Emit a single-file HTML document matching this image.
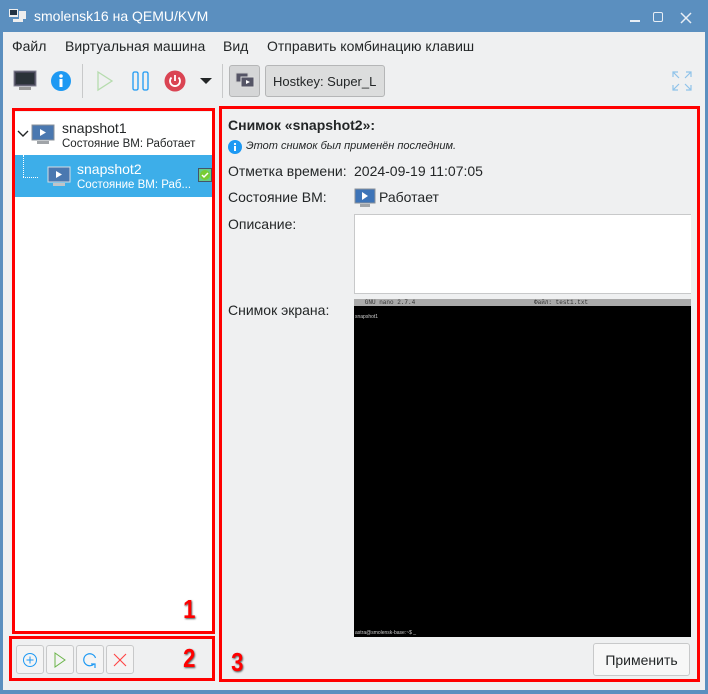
<!DOCTYPE html>
<html><head><meta charset="utf-8"><style>
*{box-sizing:border-box;margin:0;padding:0}
body{width:708px;height:694px;background:#5b8fbf;font-family:"Liberation Sans","DejaVu Sans",sans-serif;font-size:13px;color:#232627;position:relative;overflow:hidden}
.abs{position:absolute;white-space:nowrap}
#win{left:3px;top:32px;width:702px;height:658px;background:#eff0f1}
.title{left:34px;top:8px;color:#fff;font-size:14px}
.menu span{position:absolute;top:38px;font-size:14px}
.red{position:absolute;border:3px solid #f00}
.btn{position:absolute;top:645px;width:28px;height:29px;background:#f4f4f4;border:1px solid #c8c9ca;border-radius:3px}
.num{position:absolute;color:#f00;font-weight:bold;font-size:26px;text-shadow:1px 1px 2px #555;transform:scaleX(.85)}
</style></head><body>
<svg class="abs" style="left:9px;top:9px" width="18" height="16"><rect x="0" y="0" width="9" height="8" fill="#eee"/><rect x="1" y="1" width="7" height="5" fill="#234"/><rect x="10" y="2" width="7" height="8" fill="#eee"/><rect x="4" y="10" width="10" height="3" fill="#eee"/></svg>
<div class="abs title">smolensk16 на QEMU/KVM</div>
<div class="abs" style="left:630px;top:20px;width:10px;height:1.5px;background:#e8eef5"></div>
<div class="abs" style="left:653px;top:12px;width:10px;height:10px;border:1.5px solid #e8eef5;border-radius:2px"></div>
<svg class="abs" style="left:680px;top:12px" width="12" height="12"><path d="M1 1L11 11M11 1L1 11" stroke="#e8eef5" stroke-width="1.5"/></svg>
<div id="win" class="abs"></div>
<div class="menu"><span style="left:12px">Файл</span><span style="left:65px">Виртуальная машина</span><span style="left:223px">Вид</span><span style="left:267px">Отправить комбинацию клавиш</span></div>
<svg class="abs" style="left:13px;top:70px" width="24" height="22"><rect x="1" y="1" width="22" height="15" fill="#445" stroke="#889" /><rect x="3" y="3" width="18" height="11" fill="#2a3238"/><rect x="6" y="17" width="12" height="3" fill="#999"/></svg>
<svg class="abs" style="left:50px;top:70px" width="22" height="22"><circle cx="11" cy="11" r="10" fill="#1d99f3"/><rect x="9.5" y="9" width="3" height="8" fill="#fff"/><circle cx="11" cy="6" r="1.8" fill="#fff"/></svg>
<div class="abs" style="left:82px;top:64px;width:1px;height:34px;background:#c8c9ca"></div>
<svg class="abs" style="left:96px;top:70px" width="18" height="22"><path d="M2 2L16 11L2 20Z" fill="none" stroke="#b6dcae" stroke-width="1.3"/></svg>
<svg class="abs" style="left:131px;top:70px" width="20" height="22"><rect x="2" y="2" width="5" height="18" rx="1.5" fill="none" stroke="#1d99f3" stroke-width="1.3"/><rect x="12" y="2" width="5" height="18" rx="1.5" fill="none" stroke="#1d99f3" stroke-width="1.3"/></svg>
<svg class="abs" style="left:164px;top:70px" width="22" height="22"><circle cx="11" cy="11" r="10.5" fill="#da4453"/><path d="M7.5 7.5A5 5 0 1 0 14.5 7.5" fill="none" stroke="#fff" stroke-width="1.8"/><path d="M11 5V11" stroke="#fff" stroke-width="1.8"/></svg>
<svg class="abs" style="left:199px;top:77px" width="14" height="8"><path d="M1 1H13L7 7Z" fill="#232627"/></svg>
<div class="abs" style="left:222px;top:64px;width:1px;height:34px;background:#c8c9ca"></div>
<div class="abs" style="left:229px;top:65px;width:31px;height:32px;background:#d5d6d7;border:1px solid #b5b6b7;border-radius:3px"></div>
<svg class="abs" style="left:235px;top:72px" width="20" height="18"><rect x="1" y="1" width="12" height="9" fill="#556" stroke="#ccc"/><rect x="6" y="5" width="13" height="10" fill="#556" stroke="#ddd"/><path d="M11 8L15 10L11 12Z" fill="#fff"/></svg>
<div class="abs" style="left:265px;top:65px;width:120px;height:32px;background:#dcdddd;border:1px solid #b5b6b7;border-radius:3px;padding:8px 0 0 7px;font-size:13px">Hostkey: Super_L</div>
<svg class="abs" style="left:672px;top:71px" width="20" height="20" stroke="#8fc3ea" stroke-width="1.2" fill="none"><path d="M1 6V1H6M1 1L7 7M19 6V1H14M19 1L13 7M1 14V19H6M1 19L7 13M19 14V19H14M19 19L13 13"/></svg>
<div class="abs" style="left:15px;top:112px;width:198px;height:520px;background:#fff"></div>
<svg class="abs" style="left:17px;top:130px" width="12" height="8"><path d="M1 1L6 6L11 1" fill="none" stroke="#232627" stroke-width="1.4"/></svg>
<svg class="abs" style="left:31px;top:124px" width="24" height="22"><rect x="1" y="1" width="22" height="15" fill="#4a78b0" stroke="#8a9098"/><path d="M9 5L15 8.5L9 12Z" fill="#fff"/><rect x="6" y="17" width="12" height="3" fill="#a0a4a8"/></svg>
<div class="abs" style="left:62px;top:120px;font-size:14px">snapshot1</div>
<div class="abs" style="left:62px;top:138px;font-size:11.5px">Состояние ВМ: Работает</div>
<div class="abs" style="left:15px;top:155px;width:198px;height:42px;background:#3daee9"></div>
<div class="abs" style="left:23px;top:155px;width:0;height:22px;border-left:1px dotted #fff"></div>
<div class="abs" style="left:23px;top:177px;width:15px;border-top:1px dotted #fff"></div>
<svg class="abs" style="left:47px;top:166px" width="24" height="22"><rect x="1" y="1" width="22" height="15" fill="#4a78b0" stroke="#d8dde2"/><path d="M9 5L15 8.5L9 12Z" fill="#fff"/><rect x="6" y="17" width="12" height="3" fill="#c0c4c8"/></svg>
<div class="abs" style="left:77px;top:161px;font-size:14px;color:#fff">snapshot2</div>
<div class="abs" style="left:77px;top:179px;font-size:11.5px;color:#fff">Состояние ВМ: Раб...</div>
<svg class="abs" style="left:198px;top:168px" width="14" height="14"><rect x="0.5" y="0.5" width="13" height="13" fill="#6c8" stroke="#456"/><circle cx="7" cy="7" r="5" fill="#7c3"/><path d="M4 7L6 9L10 5" stroke="#fff" stroke-width="1.5" fill="none"/></svg>
<div class="abs" style="left:228px;top:117px;font-weight:bold;font-size:14px">Снимок «snapshot2»:</div>
<svg class="abs" style="left:228px;top:140px" width="14" height="14"><circle cx="7" cy="7" r="7" fill="#1d99f3"/><rect x="6" y="6" width="2" height="5" fill="#fff"/><circle cx="7" cy="4" r="1.1" fill="#fff"/></svg>
<div class="abs" style="left:246px;top:140px;font-style:italic;font-size:11px">Этот снимок был применён последним.</div>
<div class="abs" style="left:228px;top:163px;font-size:14px">Отметка времени:</div>
<div class="abs" style="left:354px;top:163px;font-size:14px">2024-09-19 11:07:05</div>
<div class="abs" style="left:228px;top:189px;font-size:14px">Состояние ВМ:</div>
<svg class="abs" style="left:354px;top:188px" width="22" height="20"><rect x="1" y="1" width="20" height="14" fill="#3d74b8" stroke="#8a9098"/><path d="M8 4L14 8L8 12Z" fill="#fff"/><rect x="6" y="16" width="10" height="3" fill="#a0a4a8"/></svg>
<div class="abs" style="left:379px;top:189px;font-size:14px">Работает</div>
<div class="abs" style="left:228px;top:216px;font-size:14px">Описание:</div>
<div class="abs" style="left:354px;top:214px;width:337px;height:80px;background:#fff;border:1px solid #c8c9ca;border-right:none"></div>
<div class="abs" style="left:228px;top:302px;font-size:14px">Снимок экрана:</div>
<div class="abs" style="left:354px;top:299px;width:337px;height:338px;background:#000"></div>
<div class="abs" style="left:354px;top:299px;width:337px;height:7px;background:#aaa;font-size:6px;line-height:7px;color:#333;font-family:'Liberation Mono',monospace;white-space:pre">   GNU nano 2.7.4                                 Файл: test1.txt</div>
<div class="abs" style="left:355px;top:314px;font-size:5px;color:#ccc">snapshot1</div>
<div class="abs" style="left:355px;top:630px;font-size:5px;color:#ccc">astra@smolensk-base:~$ _</div>
<div class="abs" style="left:593px;top:643px;width:97px;height:33px;background:#f7f7f7;border:1px solid #c8c9ca;border-radius:3px;text-align:center;padding-top:8px;font-size:14px">Применить</div>
<div class="red" style="left:12px;top:108px;width:203px;height:526px"></div>
<div class="red" style="left:9px;top:636px;width:206px;height:45px"></div>
<div class="red" style="left:219px;top:106px;width:481px;height:576px"></div>
<div class="num" style="left:182px;top:594px">1</div>
<div class="num" style="left:182px;top:643px">2</div>
<div class="num" style="left:230px;top:647px">3</div>
<div class="btn" style="left:16px"></div><div class="btn" style="left:46px"></div><div class="btn" style="left:76px"></div><div class="btn" style="left:106px"></div>
<svg class="abs" style="left:22px;top:652px" width="16" height="16"><circle cx="8" cy="8" r="6.5" fill="none" stroke="#1d99f3"/><path d="M8 4.5V11.5M4.5 8H11.5" stroke="#1d99f3"/></svg>
<svg class="abs" style="left:53px;top:651px" width="14" height="18"><path d="M2 2L12 9L2 16Z" fill="none" stroke="#6bb54a"/></svg>
<svg class="abs" style="left:82px;top:652px" width="16" height="16"><path d="M12 12A6 6 0 1 1 13.5 6" fill="none" stroke="#1d99f3" stroke-width="1.2"/><path d="M9 12H13V16" fill="none" stroke="#1d99f3" stroke-width="1.2"/></svg>
<svg class="abs" style="left:113px;top:653px" width="14" height="14"><path d="M1 1L13 13M13 1L1 13" stroke="#f44" stroke-width="1.1"/></svg>
</body></html>
